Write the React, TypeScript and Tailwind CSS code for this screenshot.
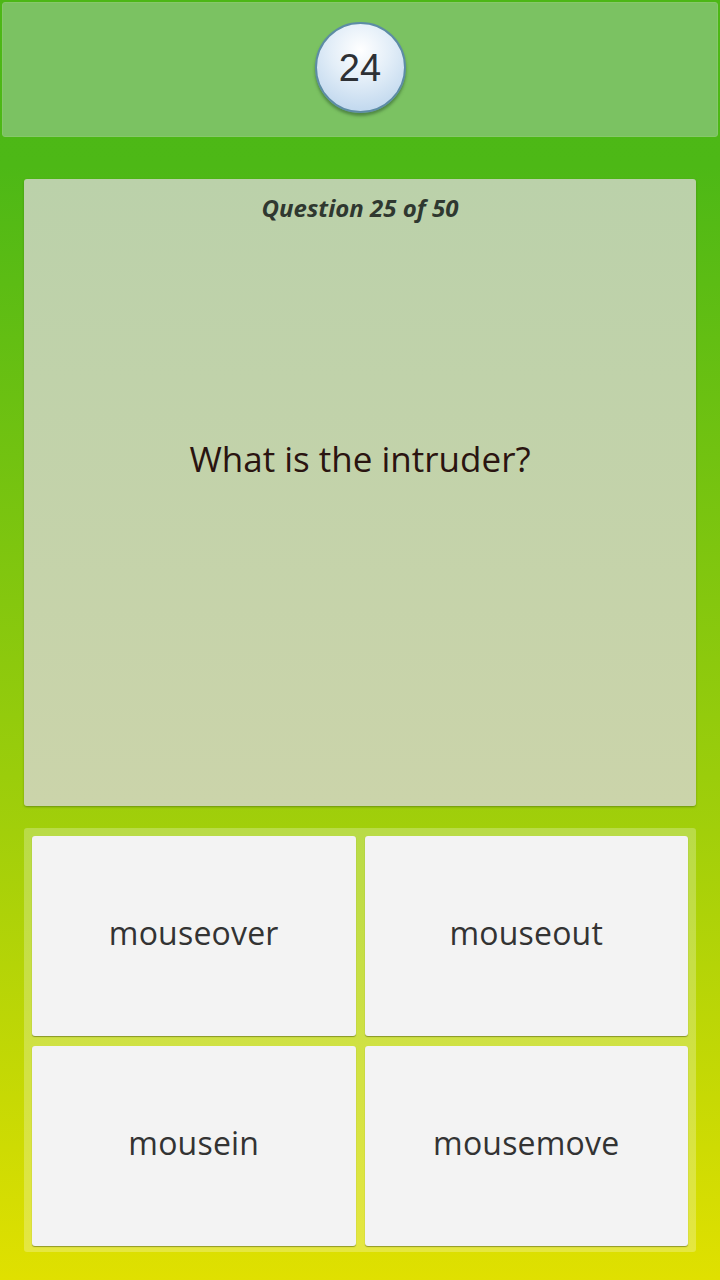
import React from "react";

const font = { fontFamily: '"Open Sans", "Noto Sans", sans-serif' };

function Answer({ label }: { label: string }) {
  return (
    <div className="flex items-center justify-center pb-[6px] rounded-[3px] bg-[#f3f3f3] shadow-[0_1px_1px_rgba(90,100,20,0.6)]">
      <span className="text-[32px] text-[#333] tracking-[0.2px]" style={font}>{label}</span>
    </div>
  );
}

export default function App() {
  return (
    <div className="w-[720px] h-[1280px] flex flex-col bg-[linear-gradient(to_bottom,#4cb716_0%,#4db816_13%,#a2cf0a_65%,#e0e000_100%)]" style={font}>
      <div className="p-[2px]">
        <div className="h-[135px] rounded-[3px] bg-[#7bc262] border border-[#86c86a] flex items-center justify-center">
          <div className="w-[91px] h-[91px] rounded-full border-[2px] border-[#5d8ca5] bg-[radial-gradient(circle_at_50%_30%,#ffffff_0%,#e3eef8_40%,#b3cfea_100%)] shadow-[0_3px_3px_rgba(40,80,40,0.5)] flex items-center justify-center mb-[4px]">
            <span className="text-[38px] text-[#2d3035] leading-none" style={{ fontFamily: '"Liberation Sans", Arial, sans-serif' }}>24</span>
          </div>
        </div>
      </div>
      <div className="px-[24px] pt-[40px]">
        <div className="h-[627px] rounded-[3px] bg-[linear-gradient(to_bottom,#bbd1aa,#cbd4aa)] shadow-[0_1px_2px_rgba(60,90,20,0.5)] flex flex-col items-center">
          <div className="mt-[13px] text-[24px] font-bold italic text-[#2f3830] leading-[32px]">Question 25 of 50</div>
          <div className="flex-1 flex items-center justify-center pb-[112px]">
            <span className="text-[35px] text-[#2a1410]">What is the intruder?</span>
          </div>
        </div>
      </div>
      <div className="px-[24px] pt-[22px]">
        <div className="h-[424px] rounded-[3px] bg-[rgba(255,255,255,0.25)] p-[8px] pb-[6px] grid grid-cols-2 grid-rows-2 gap-x-[9px] gap-y-[10px]">
          <Answer label="mouseover" />
          <Answer label="mouseout" />
          <Answer label="mousein" />
          <Answer label="mousemove" />
        </div>
      </div>
    </div>
  );
}
